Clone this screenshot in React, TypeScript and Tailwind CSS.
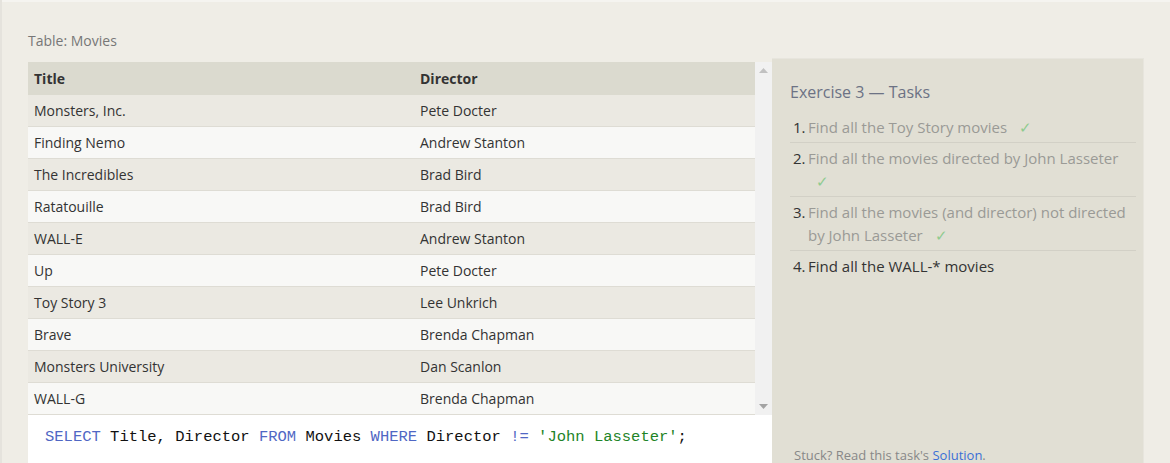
const ROWS: [string, string][] = [
  ["Monsters, Inc.", "Pete Docter"],
  ["Finding Nemo", "Andrew Stanton"],
  ["The Incredibles", "Brad Bird"],
  ["Ratatouille", "Brad Bird"],
  ["WALL-E", "Andrew Stanton"],
  ["Up", "Pete Docter"],
  ["Toy Story 3", "Lee Unkrich"],
  ["Brave", "Brenda Chapman"],
  ["Monsters University", "Dan Scanlon"],
  ["WALL-G", "Brenda Chapman"],
];

const TASKS = [
  { text: "Find all the Toy Story movies", done: true },
  { text: "Find all the movies directed by John Lasseter", done: true },
  { text: "Find all the movies (and director) not directed by John Lasseter", done: true },
  { text: "Find all the WALL-* movies", done: false },
];

function Check() {
  return <span className="ml-2 text-[#8fcb8f]">✓</span>;
}

export default function App() {
  return (
    <div className="w-[1170px] h-[463px] overflow-hidden bg-[#e5e3dd] pl-[2px] font-['Open_Sans',sans-serif]">
      <div className="h-full bg-[#efede6] border-t-2 border-[#f5f4f0] flex pl-[26px]">
        {/* Left: table + query */}
        <div className="w-[744px] flex flex-col">
          <div className="pt-[29px] pb-[11px] text-[14px] leading-[20px] text-[#777]">Table: Movies</div>
          <div className="flex">
            <div className="w-[727px] text-[14px] text-[#333]">
              <div className="flex h-[33px] items-center bg-[#dbdacf] font-bold">
                <div className="w-[386px] pl-[6px]">Title</div>
                <div className="pl-[6px]">Director</div>
              </div>
              {ROWS.map(([title, director], i) => (
                <div
                  key={title}
                  className={
                    i % 2 === 0
                      ? "flex h-[32px] items-center bg-[#ebe9e2] border-b border-[#dedcd4]"
                      : "flex h-[32px] items-center bg-[#f8f8f6] border-b border-[#dedcd4]"
                  }
                >
                  <div className="w-[386px] pl-[6px]">{title}</div>
                  <div className="pl-[6px]">{director}</div>
                </div>
              ))}
            </div>
            <div className="w-[17px] bg-[#f1f1f1] flex flex-col items-center justify-between py-[6px]">
              <svg width="9" height="5" viewBox="0 0 9 5">
                <path d="M0 5 L4.5 0 L9 5 Z" fill="#c1c1c1" />
              </svg>
              <svg width="9" height="5" viewBox="0 0 9 5">
                <path d="M0 0 L4.5 5 L9 0 Z" fill="#a3a3a3" />
              </svg>
            </div>
          </div>
          <div className="flex-1 bg-white pl-[17px] pt-[11px] font-['Liberation_Mono',monospace] text-[15.5px] leading-[22px] text-[#111] whitespace-pre">
            <span className="text-[#5067c4]">SELECT</span> Title, Director{" "}
            <span className="text-[#5067c4]">FROM</span> Movies{" "}
            <span className="text-[#5067c4]">WHERE</span> Director{" "}
            <span className="text-[#5067c4]">!=</span>{" "}
            <span className="text-[#1e8427]">'John Lasseter'</span>;
          </div>
        </div>

        {/* Right: tasks panel */}
        <div className="mt-[56px] w-[372px] bg-[#e1dfd4] border-t border-r border-[#e7e5dd] flex flex-col pl-[18px] pr-[7px]">
          <div className="pt-[22px] text-[16px] leading-[22px] text-[#6c7284]">Exercise 3 — Tasks</div>
          <ol className="mt-[9px] text-[15px] leading-[23px]">
            {TASKS.map((t, i) => (
              <li
                key={t.text}
                className={
                  i < TASKS.length - 1
                    ? "flex pt-[4px] pb-[3px] border-b border-[#d2d0c6]"
                    : "flex pt-[4px] pb-[3px]"
                }
              >
                <span className="w-[18px] shrink-0 pl-[3px] text-[#333]">{i + 1}.</span>
                <span className={t.done ? "text-[#9a9a96]" : "text-[#333]"}>
                  {t.text}
                  {t.done && " "}
                  {t.done && <Check />}
                </span>
              </li>
            ))}
          </ol>
          <div className="mt-auto pl-[4px] text-[13px] leading-[15px] text-[#888]">
            Stuck? Read this task's <span className="text-[#3b6fd6]">Solution</span>.
          </div>
        </div>
      </div>
    </div>
  );
}
